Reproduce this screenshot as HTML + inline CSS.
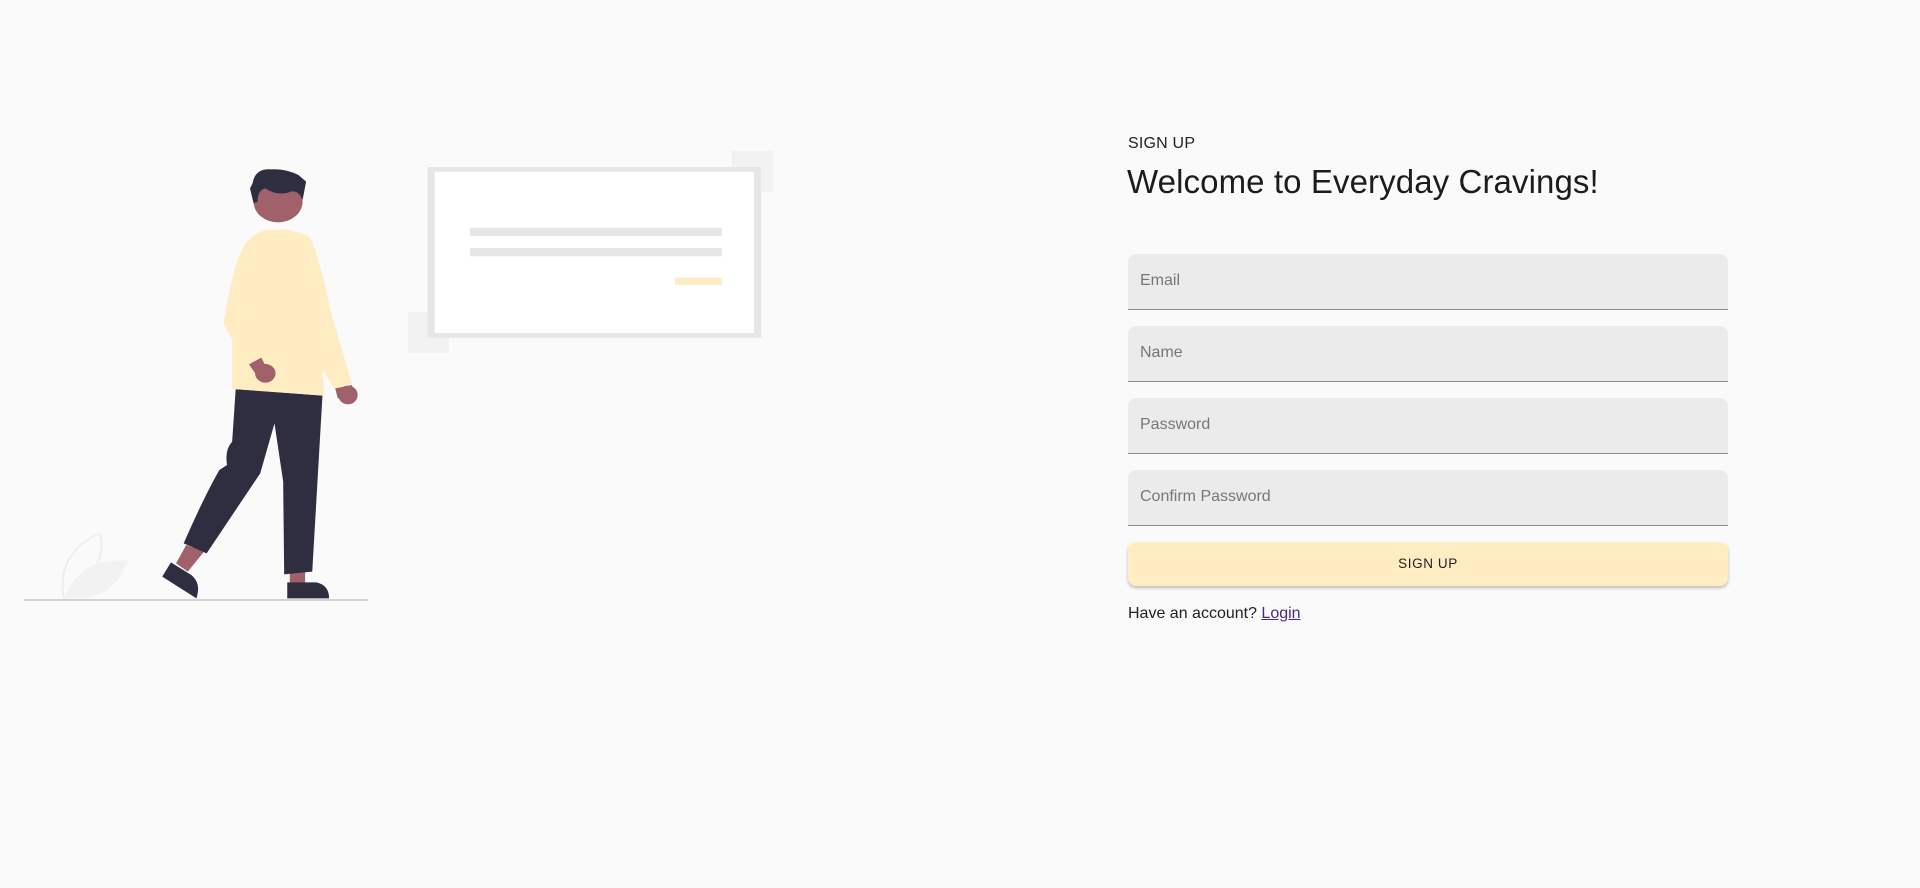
<!DOCTYPE html>
<html><head><style>
html,body{margin:0;padding:0;background:#fafafa;width:1920px;height:888px;overflow:hidden;font-family:"Liberation Sans",Roboto,sans-serif;}
.abs{position:absolute}
.lbl{left:1128px;top:135px;font-size:16px;color:#222;letter-spacing:0.2px}
.h{left:1127px;top:163px;font-size:33px;color:#1c1c1c;letter-spacing:0.1px}
.f{position:absolute;left:1128px;width:600px;height:55px;background:#ebebeb;border-radius:8px 8px 0 0;border-bottom:1px solid #8c8c8c}
.f span{position:absolute;left:12px;top:18px;font-size:16px;color:#777}
.btn{left:1128px;top:542px;width:600px;height:44px;background:#ffecc2;border-radius:8px;box-shadow:0 2px 3px rgba(0,0,0,.25);text-align:center;line-height:44px;font-size:13.5px;letter-spacing:0.6px;color:#222}
.acc{left:1128px;top:605px;font-size:16px;color:#222}
.acc a{color:#4a2a7a;text-decoration:underline}
</style></head><body>
<svg class="abs" style="left:0;top:130px" width="800" height="480" viewBox="0 0 1568 1440" preserveAspectRatio="none">
<rect x="1434" y="63" width="81" height="124" fill="#f2f2f2"/>
<rect x="800" y="546" width="80" height="123" fill="#f2f2f2"/>
<rect x="845" y="118" width="640" height="498" fill="#fff" stroke="#e6e6e6" stroke-width="14"/>
<rect x="921" y="293" width="494" height="25" fill="#e6e6e6"/>
<rect x="921" y="354" width="494" height="25" fill="#e6e6e6"/>
<rect x="1323" y="443" width="92" height="22" fill="#ffecc2"/>
<path d="M125,1405 Q110,1270 195,1210 Q205,1260 190,1300" fill="none" stroke="#eeeeee" stroke-width="4"/>
<path d="M125,1405 Q150,1320 190,1300 Q220,1290 250,1292 Q235,1360 200,1390 Q170,1410 125,1405 Z" fill="#f2f2f2"/>
<line x1="47" y1="1410" x2="722" y2="1410" stroke="#cccccc" stroke-width="5"/>
<polygon points="365,1245 400,1265 368,1325 345,1300" fill="#a0616a"/>
<rect x="568" y="1325" width="30" height="38" fill="#a0616a"/>
<path d="M462,777 L632,797 L612,1325 L557,1333 L555,1055 L538,880 L510,1030 L405,1270 L360,1240 Q400,1100 430,1020 L445,1005 Q440,960 455,935 Z" fill="#2f2e41"/>
<path d="M335,1297 L375,1335 Q395,1360 385,1405 L318,1340 Z" fill="#2f2e41"/>
<path d="M563,1357 L620,1357 Q645,1365 645,1405 L563,1405 Z" fill="#2f2e41"/>
<path d="M520,300 L560,298 Q600,310 608,325 Q630,400 648,545 L690,760 L655,775 L632,720 L635,797 L455,777 L455,632 L438,580 Q455,430 467,385 Q480,320 520,300 Z" fill="#ffecc2"/>
<polygon points="488,703 512,683 525,720 505,740" fill="#a0616a"/>
<ellipse cx="520" cy="730" rx="20" ry="28" fill="#a0616a"/>
<polygon points="657,775 690,765 695,800 662,805" fill="#a0616a"/>
<ellipse cx="682" cy="795" rx="19" ry="28" fill="#a0616a"/>
<ellipse cx="545" cy="215" rx="48" ry="62" fill="#a0616a"/>
<path d="M497,220 L490,175 L495,160 Q500,115 530,118 Q560,115 585,135 L600,155 L593,210 Q585,180 570,185 Q545,200 520,175 Q505,180 505,215 Z" fill="#2f2e41"/>
</svg>
<div class="abs lbl">SIGN UP</div>
<div class="abs h">Welcome to Everyday Cravings!</div>
<div class="f" style="top:254px"><span>Email</span></div>
<div class="f" style="top:326px"><span>Name</span></div>
<div class="f" style="top:398px"><span>Password</span></div>
<div class="f" style="top:470px"><span>Confirm Password</span></div>
<div class="abs btn">SIGN UP</div>
<div class="abs acc">Have an account? <a>Login</a></div>
</body></html>
